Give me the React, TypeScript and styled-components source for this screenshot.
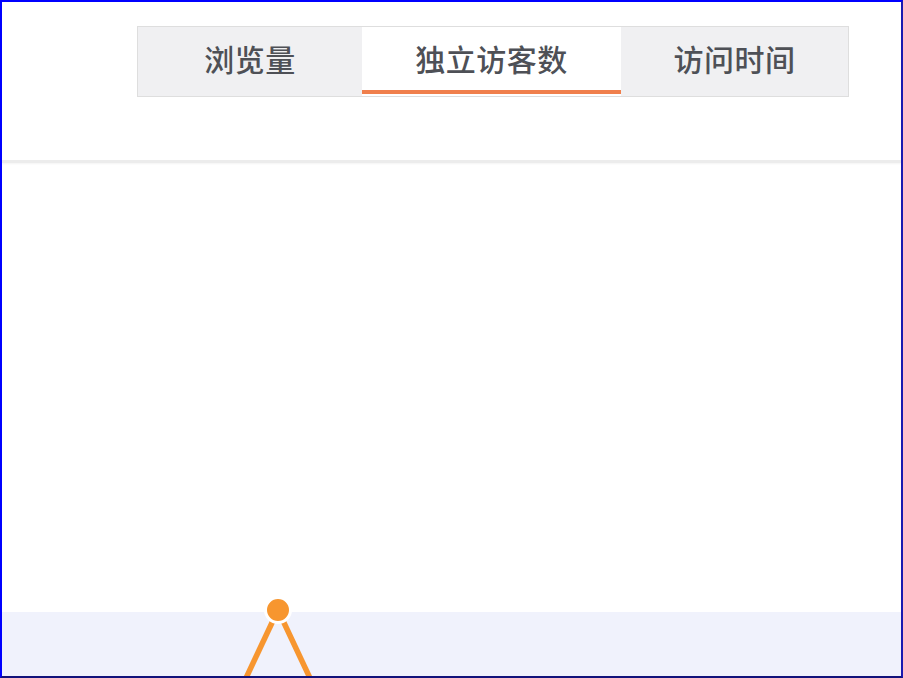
import { createGlobalStyle, styled } from 'styled-components';

const GlobalStyle = createGlobalStyle`
  html, body {
    margin: 0;
    padding: 0;
    background: #ffffff;
  }
  body {
    font-family: "Noto Sans CJK SC", "Noto Sans", sans-serif;
  }
`;

const tabs = ['浏览量', '独立访客数', '访问时间'];
const widths = [224, 259, 227];

export default function App() {
  const active = 1;
  return (
    <>
      <GlobalStyle />
      <Frame>
        <Header>
          <TabBar>
            {tabs.map((t, i) => (
              <Tab key={t} $active={i === active} $width={widths[i]}>
                {t}
              </Tab>
            ))}
          </TabBar>
        </Header>
        <Divider />
        <ChartArea>
          <Band />
          <ChartSvg viewBox="0 0 899 513" preserveAspectRatio="none">
            <line x1="276" y1="447" x2="237" y2="530" stroke="#f7962f" strokeWidth="5.5" />
            <line x1="276" y1="447" x2="315" y2="530" stroke="#f7962f" strokeWidth="5.5" />
            <circle cx="276" cy="447" r="12.5" fill="#f7962f" stroke="#ffffff" strokeWidth="3" />
          </ChartSvg>
        </ChartArea>
      </Frame>
    </>
  );
}

const Frame = styled.div`
  width: 903px;
  height: 678px;
  box-sizing: border-box;
  border-style: solid;
  border-width: 2px;
  border-color: #0000ff #1a1ab0 #12127a #0000ff;
  display: flex;
  flex-direction: column;
  overflow: hidden;
`;

const Header = styled.div`
  height: 158px;
  padding: 24px 0 0 135px;
  box-sizing: border-box;
`;

const TabBar = styled.div`
  display: flex;
  height: 71px;
  box-sizing: border-box;
  border: 1px solid #dedede;
  width: fit-content;
  background: #f0f0f2;
`;

const Tab = styled.div<{ $active: boolean; $width: number }>`
  position: relative;
  width: ${(p) => p.$width}px;
  display: flex;
  align-items: center;
  justify-content: center;
  padding-bottom: 8px;
  box-sizing: border-box;
  font-size: 30px;
  font-weight: 500;
  color: #4e5056;
  background: ${(p) => (p.$active ? '#ffffff' : 'transparent')};
  letter-spacing: 0.5px;

  &::after {
    content: '';
    display: ${(p) => (p.$active ? 'block' : 'none')};
    position: absolute;
    left: 0;
    right: 0;
    bottom: 2px;
    height: 4px;
    background: #f07f4c;
  }
`;

const Divider = styled.div`
  height: 3px;
  background: #ececec;
  box-shadow: 0 1px 2px #f4f4f4;
`;

const ChartArea = styled.div`
  position: relative;
  flex: 1;
  display: flex;
  flex-direction: column;
  justify-content: flex-end;
`;

const Band = styled.div`
  height: 64px;
  background: #f0f2fc;
`;

const ChartSvg = styled.svg`
  position: absolute;
  inset: 0;
  width: 100%;
  height: 100%;
`;
